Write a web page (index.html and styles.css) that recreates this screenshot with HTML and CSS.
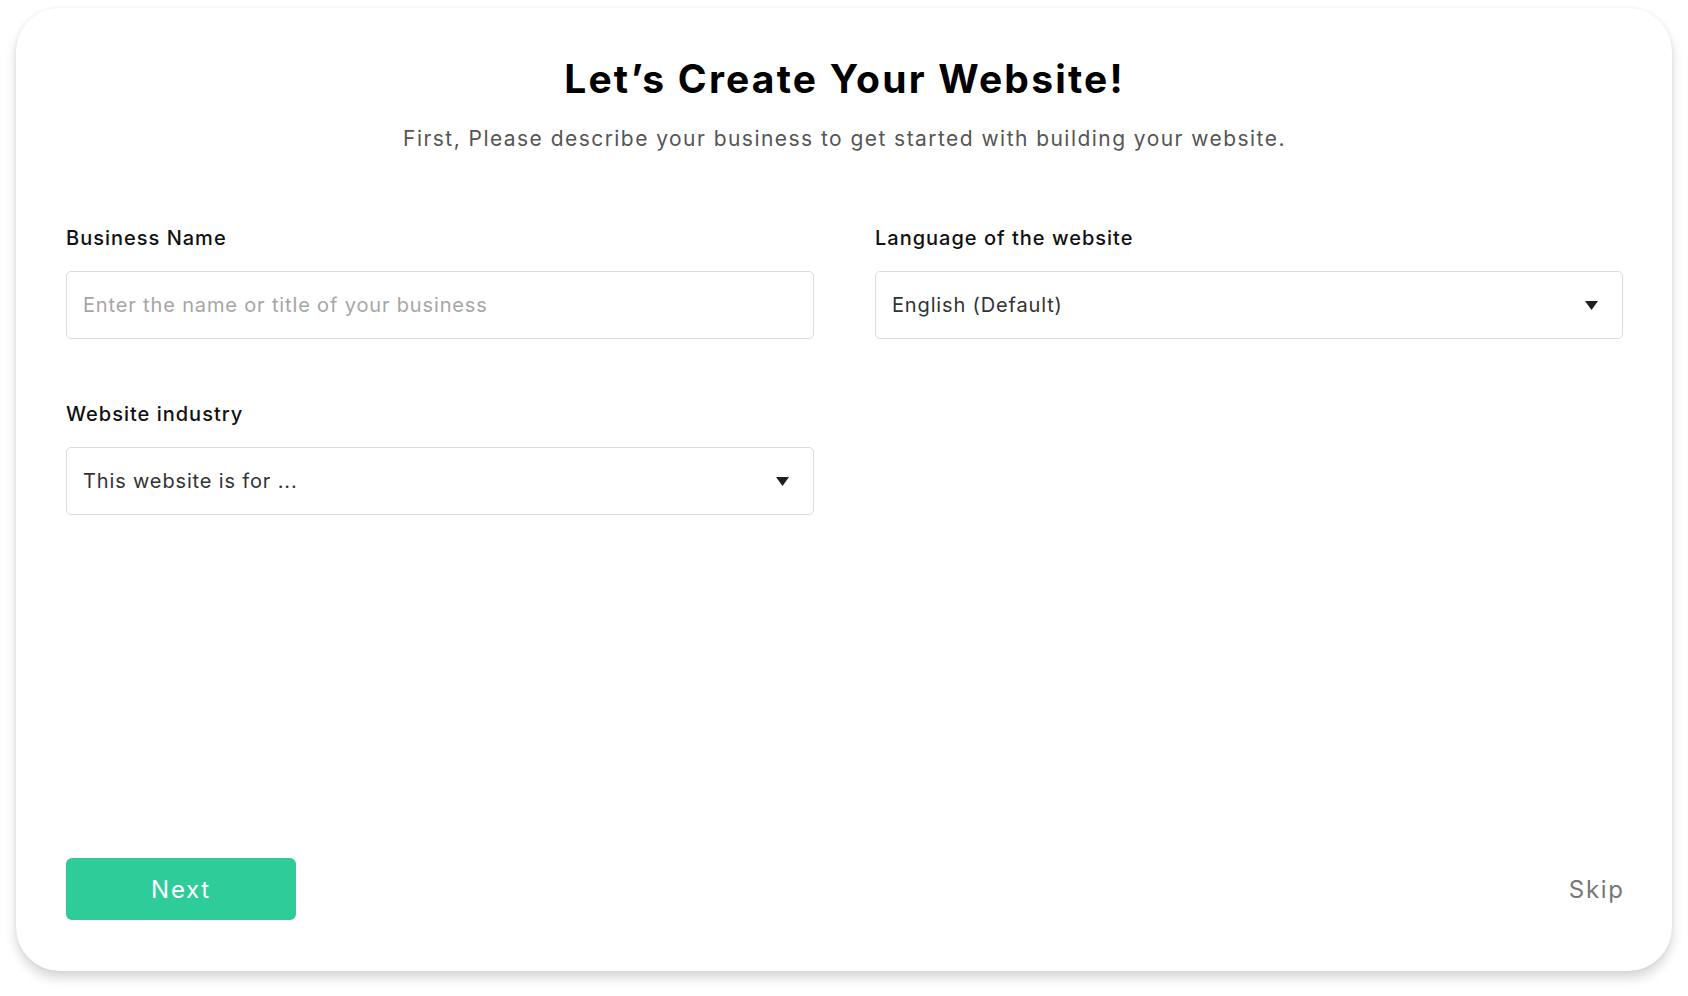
FILE: index.html
```html
<!DOCTYPE html>
<html lang="en">
  <head>
    <meta charset="UTF-8" />
    <meta name="viewport" content="width=device-width, initial-scale=1.0" />
    <title>Create Your Website</title>
    <link rel="stylesheet" href="styles.css">
  </head>
  <body>
    <div class="setup-card">
      <header class="setup-header">
        <h1>Let’s Create Your Website!</h1>
        <p>First, Please describe your business to get started with building your website.</p>
      </header>
      <main class="setup-form">
        <div class="field">
          <label for="business-name">Business Name</label>
          <input id="business-name" class="text-input" type="text" placeholder="Enter the name or title of your business" />
        </div>
        <div class="field">
          <label>Language of the website</label>
          <div class="select-box">
            <span>English (Default)</span>
            <svg width="13" height="9" viewBox="0 0 13 9"><path d="M0 0H13L6.5 9Z" fill="#1f1f1f"/></svg>
          </div>
        </div>
        <div class="field">
          <label>Website industry</label>
          <div class="select-box">
            <span>This website is for ...</span>
            <svg width="13" height="9" viewBox="0 0 13 9"><path d="M0 0H13L6.5 9Z" fill="#1f1f1f"/></svg>
          </div>
        </div>
      </main>
      <footer class="setup-footer">
        <button class="next-button">Next</button>
        <a class="skip-link" href="#">Skip</a>
      </footer>
    </div>
  </body>
</html>
```

FILE: styles.css
```css
body {
  font-family: Inter, "Open Sans", sans-serif;
  margin: 0;
  padding: 8px 16px 25px;
  background-color: #fff;
  height: 100vh;
  box-sizing: border-box;
  display: flex;
}

.setup-card {
  flex: 1;
  display: flex;
  flex-direction: column;
  background-color: #fff;
  border-radius: 44px;
  padding: 48px 49px 51px 50px;
  box-shadow: 0 7px 12px rgba(0, 0, 0, 0.16), 0 0 4px rgba(0, 0, 0, 0.05);
}

.setup-header {
  text-align: center;
}

.setup-header h1 {
  margin: 0;
  font-size: 39px;
  line-height: 46px;
  font-weight: 700;
  letter-spacing: 2.2px;
  color: #000;
}

.setup-header p {
  margin: 25px 0 0;
  font-size: 21px;
  line-height: 24px;
  letter-spacing: 1.45px;
  color: #555;
}

.setup-form {
  display: grid;
  grid-template-columns: 1fr 1fr;
  column-gap: 61px;
  row-gap: 63px;
  margin-top: 75px;
}

.field label {
  display: block;
  font-size: 20px;
  line-height: 24px;
  font-weight: 500;
  letter-spacing: 1px;
  color: #111;
  margin-bottom: 21px;
}

.text-input,
.select-box {
  box-sizing: border-box;
  width: 100%;
  height: 68px;
  border: 1px solid #dcdcdc;
  border-radius: 5px;
  padding: 0 24px 0 16px;
  font-family: inherit;
  font-size: 20px;
  letter-spacing: 0.85px;
  color: #333;
  background: #fff;
}

.text-input::placeholder {
  color: #a6a6a6;
}

.select-box {
  display: flex;
  align-items: center;
  justify-content: space-between;
}

.setup-footer {
  margin-top: auto;
  display: flex;
  justify-content: space-between;
  align-items: center;
}

.next-button {
  width: 230px;
  height: 62px;
  border: none;
  border-radius: 6px;
  background-color: #2ecc98;
  color: #fff;
  font-family: inherit;
  font-size: 24px;
  letter-spacing: 1.7px;
  cursor: pointer;
}

.skip-link {
  font-size: 24px;
  letter-spacing: 1.7px;
  margin-right: -1.7px;
  color: #777;
  text-decoration: none;
}
```
